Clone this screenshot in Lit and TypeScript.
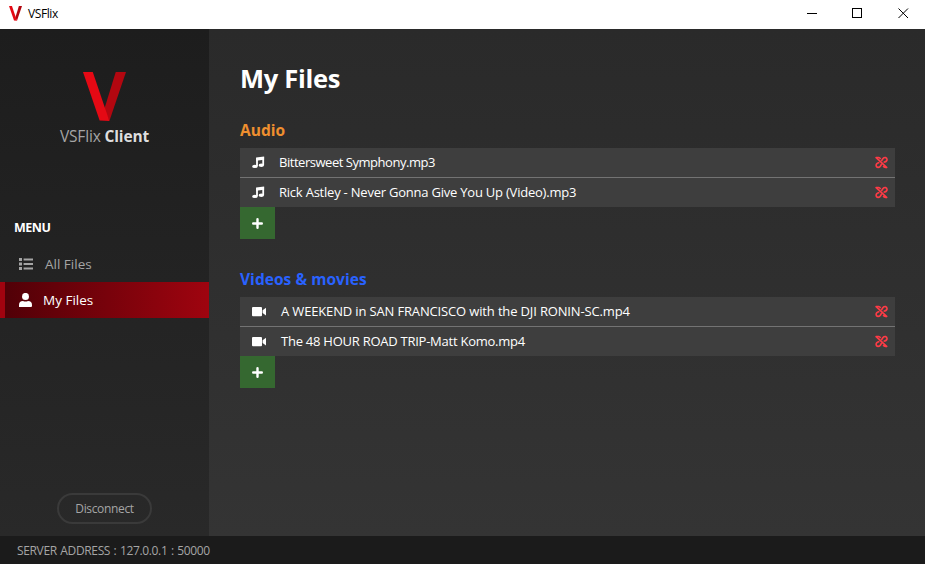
import { LitElement, html, svg, css } from "lit";
import { customElement, property } from "lit/decorators.js";

const musicIcon = svg`<path d="M5 2V10.3M11.2 1V9.3" fill="none" stroke="currentColor" stroke-width="1.8"/><path d="M4.1 1.5 12.1 .5V3.7L4.1 4.8Z"/><ellipse cx="2.9" cy="10.4" rx="2.8" ry="1.7"/><ellipse cx="9.3" cy="9.3" rx="2.7" ry="1.7"/>`;
const videoIcon = svg`<rect x="0" y="2" width="10" height="9.2" rx="1"/><path d="M10.6 5.2 14 2.8V10.4L10.6 8Z"/>`;

@customElement("file-section")
export class FileSection extends LitElement {
  @property() heading = "";
  @property() kind: "audio" | "video" = "audio";
  @property({ attribute: false }) files: { name: string; spacing: number }[] = [];

  static styles = css`
    :host { display: block; }
    h2 { margin: 0; height: 30px; line-height: 25px; font-size: 15.5px; font-weight: 700; }
    .audio { color: #ef8f2f; letter-spacing: 0.05px; }
    .video { color: #2962ff; letter-spacing: 0.05px; }
    .row { display: flex; align-items: center; box-sizing: border-box; height: 29px; padding: 0 7px 0 12px; background: #3e3e3e; color: #fff; font-size: 13px; }
    .row + .row { height: 30px; border-top: 1px solid #737373; }
    .kind { width: 14px; height: 13px; flex: none; fill: currentColor; }
    .name { flex: 1; white-space: nowrap; margin-left: 13px; padding-bottom: 2px; }
    .name.v { margin-left: 15px; }
    .unlink { width: 13px; height: 13px; fill: none; stroke: #ff3b46; stroke-width: 1.6; }
    .add { display: flex; align-items: center; justify-content: center; width: 35px; height: 32px; padding: 0; border: 0; background: #356830; }
    .add svg { width: 11px; height: 11px; fill: none; stroke: #fff; stroke-width: 2.4; stroke-linecap: round; }
  `;

  render() {
    const audio = this.kind === "audio";
    return html`
      <h2 class=${this.kind}>${this.heading}</h2>
      ${this.files.map((f) => html`
        <div class="row">
          <svg class="kind" viewBox="0 0 14 13">${audio ? musicIcon : videoIcon}</svg>
          <span class=${audio ? "name" : "name v"} style="letter-spacing:${f.spacing}px">${f.name}</span>
          <svg class="unlink" viewBox="0 0 13 13">
            <path d="M.6 1.2 12.2 11.8M1.8 1.5H3.6Q4.8 1.6 5.6 3M6.4 5 8 2.6Q9 1.4 10.6 1.6 12.2 2 12 4 11.6 5.9 8.6 6.3M4.4 6.5Q1.2 7 1.1 9.2 1.2 11.3 3.2 11.4 4.8 11.4 5.6 9.8L6.6 8M8.2 10Q9 11.4 10.4 11.4H11.6"/>
          </svg>
        </div>`)}
      <button class="add" aria-label="Add file"><svg viewBox="0 0 11 11"><path d="M5.5 1.2V9.8M1.2 5.5H9.8"/></svg></button>
    `;
  }
}

@customElement("app-root")
export class AppRoot extends LitElement {
  static styles = css`
    :host { display: flex; flex-direction: column; width: 925px; height: 564px; overflow: hidden; font-family: "Open Sans", "Noto Sans", sans-serif; }
    .titlebar { display: flex; align-items: center; height: 29px; flex: none; box-sizing: border-box; background: #fff; color: #000; font-size: 12px; padding: 0 16px 2px 9px; }
    .titlebar .mark { width: 13px; height: 15px; margin-right: 6px; }
    .apptitle { flex: 1; letter-spacing: -0.4px; }
    .controls { display: flex; gap: 35px; }
    .controls svg { width: 11px; height: 11px; fill: none; stroke: #000; }
    .controls svg:first-child { margin-right: -1px; }
    .body { display: flex; flex: 1; min-height: 0; background: linear-gradient(#2a2a2a, #343434); }
    .side { display: flex; flex-direction: column; width: 209px; flex: none; background: linear-gradient(#1d1d1d, #292929); }
    .logo { width: 43px; height: 50px; margin: 43px 0 0 83px; display: block; }
    .brand { height: 28px; line-height: 29px; text-align: center; font-size: 15.5px; letter-spacing: -0.15px; color: #a5a5a5; white-space: nowrap; }
    .brand b { color: #dedede; }
    .menu { margin: 66px 0 0 14px; height: 30px; line-height: 24px; font-size: 12.5px; font-weight: 700; color: #fff; letter-spacing: -0.5px; }
    .item { display: flex; align-items: center; box-sizing: border-box; height: 36px; padding-left: 19px; color: #a5a5a5; font-size: 13.5px; letter-spacing: 0; }
    .item svg { width: 14px; height: 14px; fill: currentColor; margin-right: 12px; }
    .item.active { color: #fff; border-left: 5px solid #a1030f; padding-left: 14px; background: linear-gradient(90deg, #510007, #9f040f); }
    .item.active svg { margin-right: 10px; }
    .disconnect { margin: auto auto 12px; margin-left: 57px; box-sizing: border-box; width: 95px; height: 31px; border: 2px solid #3a3a3a; border-radius: 16px; background: transparent; color: #a5a5a5; font: 12px "Open Sans", sans-serif; letter-spacing: -0.35px; padding: 0; }
    .main { flex: 1; padding: 30px 30px 0 31px; }
    h1 { margin: 0 0 21px; height: 38px; line-height: 38px; color: #fff; font-size: 25.5px; font-weight: 700; letter-spacing: -0.3px; }
    file-section + file-section { margin-top: 28px; }
    .status { height: 28px; flex: none; box-sizing: border-box; line-height: 29px; padding-left: 17px; background: #1b1b1b; color: #a5a5a5; font-size: 12px; letter-spacing: -0.35px; word-spacing: 0.75px; }
  `;

  private audio = [
    { name: "Bittersweet Symphony.mp3", spacing: -0.47 },
    { name: "Rick Astley - Never Gonna Give You Up (Video).mp3", spacing: -0.22 },
  ];
  private videos = [
    { name: "A WEEKEND in SAN FRANCISCO with the DJI RONIN-SC.mp4", spacing: -0.15 },
    { name: "The 48 HOUR ROAD TRIP-Matt Komo.mp4", spacing: -0.25 },
  ];

  private mark(cls: string) {
    return html`<svg class=${cls} viewBox="0 0 44 50" preserveAspectRatio="none">
      <path d="M33.5 0H44L27 49 21.5 38Z" fill="#b20710"/>
      <path d="M0 0H10L27 49 17 48.5Z" fill="#e50914"/>
    </svg>`;
  }

  render() {
    return html`
      <header class="titlebar">
        ${this.mark("mark")}<span class="apptitle">VSFlix</span>
        <div class="controls">
          <svg viewBox="0 0 11 11"><path d="M0 5.5H10"/></svg>
          <svg viewBox="0 0 11 11"><rect x=".5" y=".5" width="9" height="9"/></svg>
          <svg viewBox="0 0 11 11"><path d="M.5 .5 10 10M10 .5 .5 10"/></svg>
        </div>
      </header>
      <div class="body">
        <aside class="side">
          ${this.mark("logo")}
          <div class="brand">VSFlix <b>Client</b></div>
          <div class="menu">MENU</div>
          <div class="item">
            <svg viewBox="0 0 14 14"><path d="M0 1H3V4H0ZM0 5.5H3V8.5H0ZM0 10H3V13H0ZM4.6 1.5H14V3.5H4.6ZM4.6 6H14V8H4.6ZM4.6 10.5H14V12.5H4.6Z"/></svg>All Files
          </div>
          <div class="item active">
            <svg viewBox="0 0 14 14"><circle cx="6.5" cy="3.4" r="3.5"/><path d="M0 14V12Q0 8 4 8 6.5 9 9 8 13 8 13 12V13Q13 14 12 14Z"/></svg>My Files
          </div>
          <button class="disconnect">Disconnect</button>
        </aside>
        <main class="main">
          <h1>My Files</h1>
          <file-section heading="Audio" kind="audio" .files=${this.audio}></file-section>
          <file-section heading="Videos &amp; movies" kind="video" .files=${this.videos}></file-section>
        </main>
      </div>
      <footer class="status">SERVER ADDRESS : 127.0.0.1 : 50000</footer>
    `;
  }
}
